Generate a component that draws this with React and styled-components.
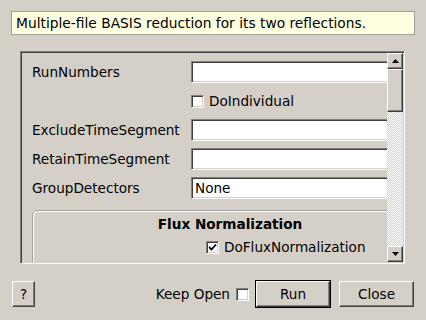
import React from 'react';
import styled, { createGlobalStyle, css } from 'styled-components';

const GlobalStyle = createGlobalStyle`
  html, body {
    margin: 0;
    padding: 0;
    background: #d4d0c8;
  }
  body {
    font-family: "DejaVu Sans", "Noto Sans", sans-serif;
    font-size: 13.6px;
    color: #000;
  }
`;

const sunken = css`
  border: 1px solid;
  border-color: #808080 #fff #fff #808080;
  box-shadow: inset 1px 1px #404040, inset -1px -1px #d4d0c8;
`;

const raised = css`
  border: 1px solid;
  border-color: #fff #404040 #404040 #fff;
  box-shadow: inset -1px -1px #808080;
  background: #d4d0c8;
`;

const Window = styled.div`
  width: 426px;
  height: 320px;
  box-sizing: border-box;
  padding: 11px 11px 12px;
  display: flex;
  flex-direction: column;
`;

const Description = styled.div`
  height: 24px;
  box-sizing: border-box;
  background: #ffffe1;
  border: 1px solid #a0a0a0;
  padding: 0 4px;
  display: flex;
  align-items: center;
  white-space: nowrap;
  font-size: 13.8px;
`;

const Frame = styled.div`
  ${sunken};
  margin: 16px 10px 0 9px;
  height: 213px;
  box-sizing: border-box;
  display: flex;
  padding: 1px;
`;

const Viewport = styled.div`
  flex: 1;
  overflow: hidden;
`;

const Content = styled.div`
  width: 416px;
  box-sizing: border-box;
  padding: 8px 10px 0;
  display: flex;
  flex-direction: column;
  gap: 7px;
`;

const Row = styled.div`
  display: grid;
  grid-template-columns: 159px 1fr;
  align-items: center;
  height: 22px;
`;

const Label = styled.div`
  white-space: nowrap;
`;

const Field = styled.div`
  ${sunken};
  height: 22px;
  box-sizing: border-box;
  background: #fff;
  padding: 0 3px;
  display: flex;
  align-items: center;
`;

const CheckLine = styled.label`
  display: flex;
  align-items: center;
  gap: 5px;
  margin-left: ${p => p.$indent || 0}px;
  white-space: nowrap;
`;

const Box = styled.span`
  ${sunken};
  width: 13px;
  height: 13px;
  box-sizing: border-box;
  background: #fff;
  display: inline-flex;
  align-items: center;
  justify-content: center;
  flex: none;
`;

const GroupBox = styled.div`
  margin-top: 4px;
  border: 1px solid #a0a0a0;
  border-radius: 5px 5px 0 0;
  box-shadow: inset 1px 1px #fff;
  padding: 5px 0 0;
  height: 60px;
`;

const GroupTitle = styled.div`
  font-weight: bold;
  text-align: center;
  line-height: 16px;
  margin-bottom: 7px;
`;

const Scrollbar = styled.div`
  width: 16px;
  display: flex;
  flex-direction: column;
`;

const ArrowButton = styled.div`
  ${raised};
  height: 16px;
  box-sizing: border-box;
  display: flex;
  align-items: center;
  justify-content: center;
`;

const Handle = styled.div`
  ${raised};
  height: 43px;
  box-sizing: border-box;
`;

const Track = styled.div`
  flex: 1;
  background: repeating-conic-gradient(#fff 0 25%, #d4d0c8 0 50%) 0 0 / 2px 2px;
`;

const Footer = styled.div`
  margin-top: auto;
  display: flex;
  align-items: center;
  padding: 0 1px;
`;

const Button = styled.div`
  ${raised};
  width: ${p => p.$w}px;
  height: 26px;
  box-sizing: border-box;
  display: flex;
  align-items: center;
  justify-content: center;
  margin-left: ${p => p.$ml || 0}px;
`;

const DefaultFrame = styled.div`
  border: 1px solid #000;
  margin-left: 6px;
`;

const Spacer = styled.div`
  flex: 1;
`;

const KeepLabel = styled.span`
  margin-right: 6px;
`;

const Arrow = ({ down }) => (
  <svg width="7" height="4" viewBox="0 0 7 4">
    <polygon points={down ? '0,0 7,0 3.5,4' : '0,4 7,4 3.5,0'} fill="#000" />
  </svg>
);

const CheckBox = ({ checked }) => (
  <Box>
    {checked && (
      <svg width="9" height="9" viewBox="0 0 9 9">
        <path d="M1 4 L3.5 6.5 L8 1.5" stroke="#000" strokeWidth="1.8" fill="none" />
      </svg>
    )}
  </Box>
);

const fields = [
  { label: 'ExcludeTimeSegment', value: '' },
  { label: 'RetainTimeSegment', value: '' },
  { label: 'GroupDetectors', value: 'None' },
];

export default function App() {
  return (
    <>
      <GlobalStyle />
      <Window>
        <Description>Multiple-file BASIS reduction for its two reflections.</Description>
        <Frame>
          <Viewport>
            <Content>
              <Row>
                <Label>RunNumbers</Label>
                <Field />
              </Row>
              <Row>
                <span />
                <CheckLine>
                  <CheckBox />
                  DoIndividual
                </CheckLine>
              </Row>
              {fields.map(f => (
                <Row key={f.label}>
                  <Label>{f.label}</Label>
                  <Field>{f.value}</Field>
                </Row>
              ))}
              <GroupBox>
                <GroupTitle>Flux Normalization</GroupTitle>
                <CheckLine $indent={173}>
                  <CheckBox checked />
                  DoFluxNormalization
                </CheckLine>
              </GroupBox>
            </Content>
          </Viewport>
          <Scrollbar>
            <ArrowButton>
              <Arrow />
            </ArrowButton>
            <Handle />
            <Track />
            <ArrowButton>
              <Arrow down />
            </ArrowButton>
          </Scrollbar>
        </Frame>
        <Footer>
          <Button $w={23}>?</Button>
          <Spacer />
          <KeepLabel>Keep Open</KeepLabel>
          <CheckBox />
          <DefaultFrame>
            <Button $w={74}>Run</Button>
          </DefaultFrame>
          <Button $w={75} $ml={8}>Close</Button>
        </Footer>
      </Window>
    </>
  );
}
